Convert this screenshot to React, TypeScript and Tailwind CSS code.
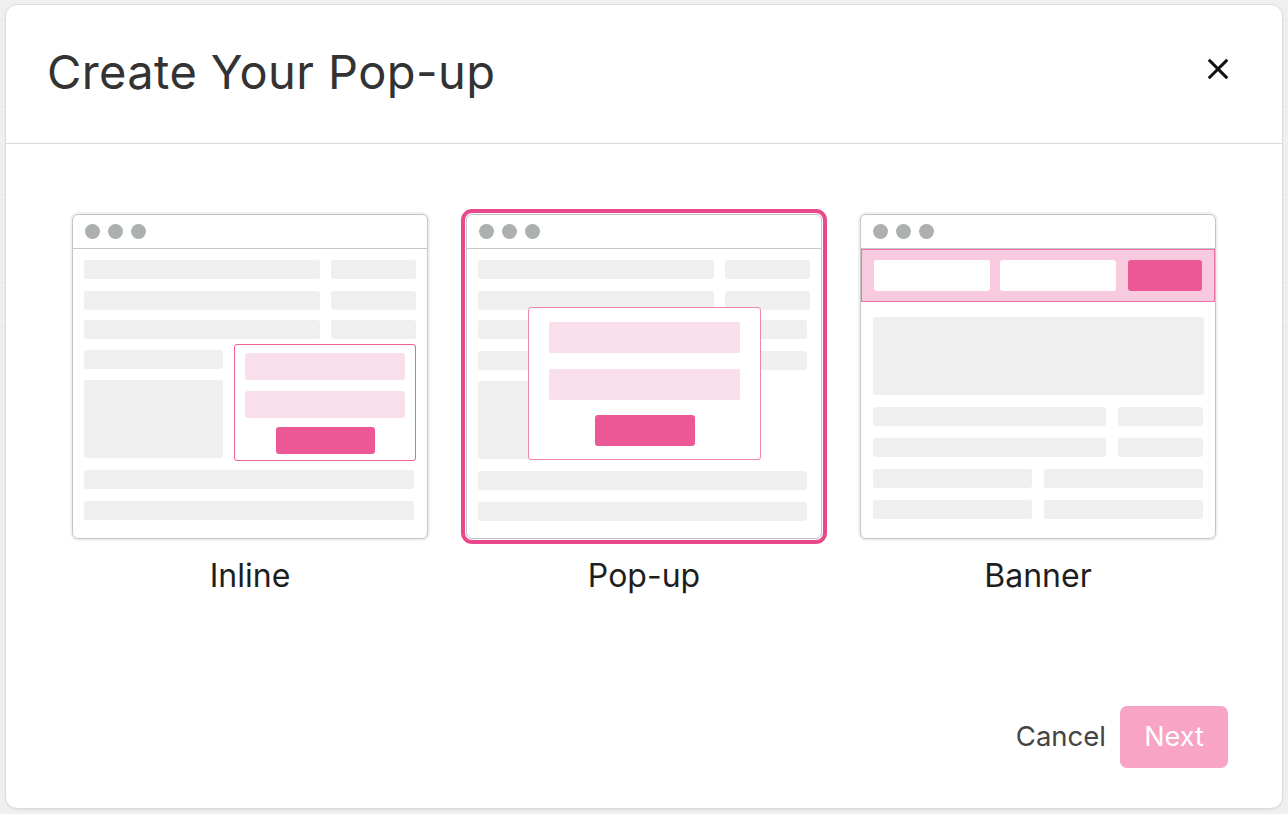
import React from "react";

const Bar = ({ className = "" }: { className?: string }) => (
  <div className={"rounded-[3px] bg-[#efefef] " + className} />
);

const Dots = () => (
  <div className="flex h-[34px] items-center gap-[8px] border-b border-[#c6c6c6] pl-[12px]">
    <div className="h-[15px] w-[15px] rounded-full bg-[#adb0b0]" />
    <div className="h-[15px] w-[15px] rounded-full bg-[#adb0b0]" />
    <div className="h-[15px] w-[15px] rounded-full bg-[#adb0b0]" />
  </div>
);

const Frame = ({ children, selected = false }: { children: React.ReactNode; selected?: boolean }) => (
  <div
    className={
      "h-[325px] w-[356px] overflow-hidden rounded-[6px] border border-[#c4c4c4] bg-white " +
      (selected
        ? "ring-4 ring-[#e8498a] ring-offset-1 ring-offset-white"
        : "shadow-[0_0_0_2px_#f1f1f1]")
    }
  >
    <Dots />
    {children}
  </div>
);

const InlineFrame = () => (
  <Frame>
    <div className="flex flex-col px-[11px] pt-[11px]">
      <div className="flex gap-[11px]">
        <Bar className="h-[19px] w-[236px]" />
        <Bar className="h-[19px] flex-1" />
      </div>
      <div className="mt-[12px] flex gap-[11px]">
        <Bar className="h-[19px] w-[236px]" />
        <Bar className="h-[19px] flex-1" />
      </div>
      <div className="mt-[10px] flex gap-[11px]">
        <Bar className="h-[19px] w-[236px]" />
        <Bar className="h-[19px] flex-1" />
      </div>
      <div className="mt-[5px] flex gap-[11px]">
        <div className="flex w-[139px] flex-col pt-[6px]">
          <Bar className="h-[19px]" />
          <Bar className="mt-[11px] h-[78px]" />
        </div>
        <div className="flex h-[117px] flex-1 flex-col items-center rounded-[3px] border border-[#ee5f99] px-[10px] pt-[8px]">
          <div className="h-[27px] w-full rounded-[3px] bg-[#f9dfeb]" />
          <div className="mt-[11px] h-[27px] w-full rounded-[3px] bg-[#f9dfeb]" />
          <div className="mt-[9px] h-[27px] w-[99px] rounded-[3px] bg-[#ec5896]" />
        </div>
      </div>
      <Bar className="mt-[9px] h-[19px] w-[330px]" />
      <Bar className="mt-[12px] h-[19px] w-[330px]" />
    </div>
  </Frame>
);

const PopupFrame = () => (
  <Frame selected>
    <div className="relative flex flex-col px-[11px] pt-[11px]">
      <div className="flex gap-[11px]">
        <Bar className="h-[19px] w-[236px]" />
        <Bar className="h-[19px] flex-1" />
      </div>
      <div className="mt-[12px] flex gap-[11px]">
        <Bar className="h-[19px] w-[236px]" />
        <Bar className="h-[19px] flex-1" />
      </div>
      <div className="mt-[10px] flex gap-[11px] pr-[3px]">
        <Bar className="h-[19px] w-[236px]" />
        <Bar className="h-[19px] flex-1" />
      </div>
      <div className="mt-[12px] flex gap-[11px] pr-[3px]">
        <Bar className="h-[19px] w-[236px]" />
        <Bar className="h-[19px] flex-1" />
      </div>
      <Bar className="mt-[11px] h-[78px] w-[139px]" />
      <Bar className="mt-[12px] h-[19px] w-[329px]" />
      <Bar className="mt-[12px] h-[19px] w-[329px]" />
      <div className="absolute left-[61px] top-[58px] flex h-[153px] w-[233px] flex-col items-center rounded-[3px] border border-[#f084b2] bg-white px-[20px] pt-[14px]">
        <div className="h-[31px] w-full rounded-[2px] bg-[#f9dfeb]" />
        <div className="mt-[16px] h-[31px] w-full rounded-[2px] bg-[#f9dfeb]" />
        <div className="mt-[15px] h-[31px] w-[100px] rounded-[3px] bg-[#ec5896]" />
      </div>
    </div>
  </Frame>
);

const BannerFrame = () => (
  <Frame>
    <div className="flex gap-[10px] border border-[#ee72a7] bg-[#f7cadf] px-[12px] py-[10px]">
      <div className="h-[31px] w-[116px] rounded-[3px] bg-white" />
      <div className="h-[31px] w-[116px] rounded-[3px] bg-white" />
      <div className="ml-[2px] h-[31px] flex-1 rounded-[3px] bg-[#ec5896]" />
    </div>
    <div className="flex flex-col px-[12px] pt-[15px]">
      <Bar className="h-[78px] w-[331px]" />
      <div className="mt-[12px] flex gap-[12px]">
        <Bar className="h-[19px] w-[234px]" />
        <Bar className="h-[19px] w-[85px]" />
      </div>
      <div className="mt-[12px] flex gap-[12px]">
        <Bar className="h-[19px] w-[234px]" />
        <Bar className="h-[19px] w-[85px]" />
      </div>
      <div className="mt-[12px] flex gap-[12px]">
        <Bar className="h-[19px] w-[159px]" />
        <Bar className="h-[19px] w-[160px]" />
      </div>
      <div className="mt-[12px] flex gap-[12px]">
        <Bar className="h-[19px] w-[159px]" />
        <Bar className="h-[19px] w-[160px]" />
      </div>
    </div>
  </Frame>
);

const Option = ({ label, children }: { label: string; children: React.ReactNode }) => (
  <div className="flex w-[356px] flex-col items-center">
    {children}
    <div className="mt-[17px] text-[32px] leading-[40px] text-[#1e1e1e]">{label}</div>
  </div>
);

export default function App() {
  return (
    <div
      className="relative h-[814px] w-[1288px] overflow-hidden bg-[#efefef]"
      style={{ fontFamily: "Inter, 'Noto Sans', sans-serif" }}
    >
      <div className="flex flex-col">
        <div className="h-[20px] border-b border-[#e6e6e6]" />
        <div className="h-[87px] border-b border-[#e6e6e6]" />
        <div className="h-[88px] border-b border-[#e6e6e6]" />
        <div className="h-[88px] border-b border-[#e6e6e6]" />
        <div className="h-[44px] border-b border-[#e6e6e6]" />
      </div>
      <div className="absolute left-[5px] top-[4px] flex h-[805px] w-[1278px] flex-col rounded-[12px] border border-[#dcdcdc] bg-white shadow-[0_1px_2px_rgba(0,0,0,0.06)]">
        <div className="flex h-[139px] items-center justify-between border-b border-[#dadada] pl-[41px] pr-[50px]">
          <h1 className="pb-[4px] text-[47px] font-normal tracking-[0.4px] text-[#333333]">Create Your Pop-up</h1>
          <svg width="28" height="28" viewBox="0 0 24 24" fill="none" stroke="#111" strokeWidth="2.6" strokeLinecap="square" className="mb-[10px]">
            <path d="M5 5L19 19M19 5L5 19" />
          </svg>
        </div>
        <div className="flex justify-center gap-[38px] pt-[70px]">
          <Option label="Inline">
            <InlineFrame />
          </Option>
          <Option label="Pop-up">
            <PopupFrame />
          </Option>
          <Option label="Banner">
            <BannerFrame />
          </Option>
        </div>
        <div className="mt-auto flex items-center justify-end gap-[14px] pb-[40px] pr-[54px]">
          <button className="text-[27.5px] text-[#444444]">Cancel</button>
          <button className="flex h-[62px] w-[108px] items-center justify-center rounded-[7px] bg-[#f7a4c5] text-[27px] text-white">
            Next
          </button>
        </div>
      </div>
    </div>
  );
}
